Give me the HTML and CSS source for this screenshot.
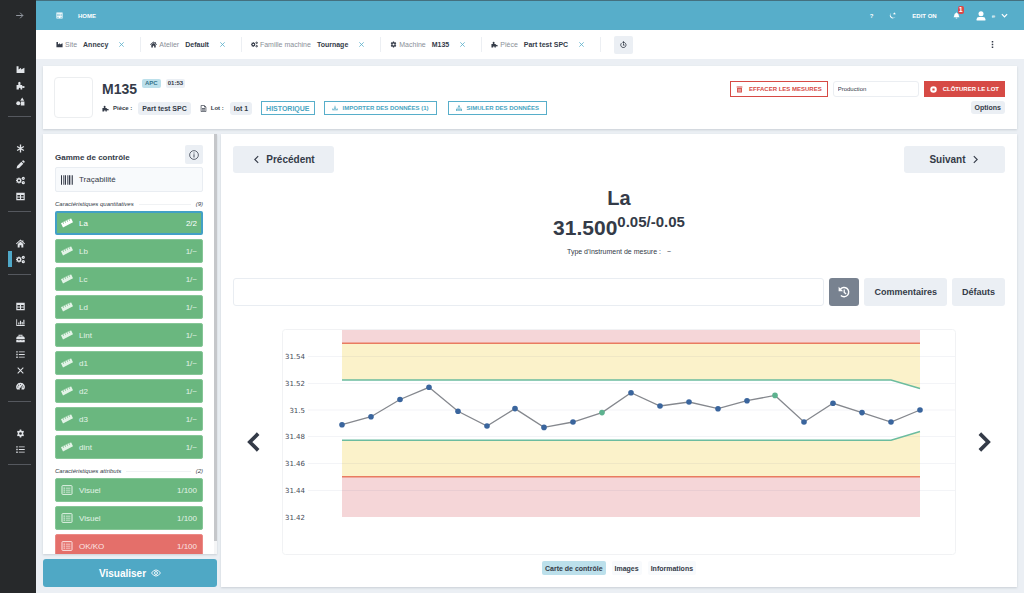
FILE: index.html
```html
<!doctype html>
<html lang="fr">
<head>
<meta charset="utf-8">
<title>M135 - Gamme de contrôle</title>
<link rel="stylesheet" href="styles.css">
</head>
<body>
<svg class="sprite" aria-hidden="true">
	<symbol id="i-factory" viewBox="0 0 16 16"><path d="M1 2h3.500v6L9 5v3l6-3v9H1z"/></symbol>
	<symbol id="i-part" viewBox="0 0 16 16"><path d="M1 7h3.200V5a2.200 2.200 0 1 1 3.600 0V7H11v2.200h1.500a1.800 1.800 0 1 1 0 3H11V15H8v-1.500a1.500 1.500 0 0 0-3 0V15H1z"/></symbol>
	<symbol id="i-shapes" viewBox="0 0 16 16"><circle cx="4" cy="11" r="3.500"/><path d="M8.500 8H15v7H8.500zM11 1l3.500 5.500h-7z"/></symbol>
	<symbol id="i-asterisk" viewBox="0 0 16 16"><path d="M8 1v14M2 4.500l12 7M14 4.500l-12 7" fill="none" stroke="currentColor" stroke-width="2.400"/></symbol>
	<symbol id="i-pencil" viewBox="0 0 16 16"><path d="M1 15l1-4.500L9.500 3 13 6.500 5.500 14zM10.500 2L12 .8q.8-.6 1.600.1l1.500 1.500q.7.8.1 1.600L14 5.500z"/></symbol>
	<symbol id="i-gear" viewBox="0 0 16 16"><path fill-rule="evenodd" d="M6.700 1h2.600l.4 2 1.400.7 1.900-.7 1.300 2.200L12.800 6.600v2.800l1.500 1.400-1.300 2.200-1.900-.7-1.400.7-.4 2H6.700l-.4-2-1.400-.7-1.900.7-1.300-2.200 1.500-1.400V6.600L1.700 5.200 3 3l1.900.7 1.400-.7zM8 5.600a2.400 2.400 0 1 0 0 4.800 2.400 2.400 0 0 0 0-4.800z"/></symbol>
	<symbol id="i-gears" viewBox="0 0 16 16"><circle cx="5.300" cy="8" r="3.200" fill="none" stroke="currentColor" stroke-width="2.600"/><path d="M5.300 2.500v2M5.300 11.500v2M0 8h2M1.400 4.100l1.500 1.500M7.700 10.400l1.500 1.500M9.200 4.100L7.700 5.600M2.900 10.400l-1.500 1.500" fill="none" stroke="currentColor" stroke-width="1.600"/><circle cx="13" cy="4.200" r="1.700" fill="none" stroke="currentColor" stroke-width="2.200"/><circle cx="13" cy="11.800" r="1.700" fill="none" stroke="currentColor" stroke-width="2.200"/></symbol>
	<symbol id="i-table" viewBox="0 0 16 16"><path fill-rule="evenodd" d="M.5 1.500h15v13H.5zM2.500 5.500v2.700H7V5.500zM9 5.500v2.700h4.500V5.500zM2.500 9.900v2.600H7V9.900zM9 9.900v2.600h4.500V9.900z"/></symbol>
	<symbol id="i-home" viewBox="0 0 16 16"><path d="M8 1l3.500 3V2H13v3.300l3 2.700-1 1.200-7-6-7 6L0 8zM8 4.500l5 4.300V15H9.500v-4h-3v4H3V8.800z"/></symbol>
	<symbol id="i-chart" viewBox="0 0 16 16"><path d="M.5 2H2v10.500h13.500V14H.5zM4 8h2v3.500H4zM7 5h2v6.500H7zM10 7h2v4.500h-2zM13 3h2v8.500h-2z"/></symbol>
	<symbol id="i-toolbox" viewBox="0 0 16 16"><path fill-rule="evenodd" d="M4.500 4.500V1.500h7v3H14l1.500 2v3h-15v-3L2 4.500zM6 3v1.500h4V3zM.5 10.500h4v1.200H6v-1.200h4v1.200h1.500v-1.200h4v4H.5z"/></symbol>
	<symbol id="i-list" viewBox="0 0 16 16"><path d="M.5 2H3v2.400H.5zM5 2.500h10.500V4H5zM.5 6.800H3v2.400H.5zM5 7.300h10.500v1.500H5zM.5 11.600H3V14H.5zM5 12h10.500v1.500H5z"/></symbol>
	<symbol id="i-cross" viewBox="0 0 16 16"><path d="M3 3l10 10M13 3L3 13" fill="none" stroke="currentColor" stroke-width="1.800"/></symbol>
	<symbol id="i-gauge" viewBox="0 0 16 16"><path fill-rule="evenodd" d="M8 1.500a7.500 7.500 0 0 0-6.200 12h12.400A7.500 7.500 0 0 0 8 1.500zM7.200 3.500h1.600v1.600H7.200zM2.500 8h1.700v1.600H2.500zM4 5h1.600v1.600H4zM11.800 8h1.700v1.600h-1.700zM11.200 4.800l.9.500-2.600 5.200a1.700 1.700 0 1 1-1-.5z"/></symbol>
	<symbol id="i-right" viewBox="0 0 16 16"><path d="M2 8h12M9 3l5 5-5 5" fill="none" stroke="currentColor" stroke-width="1.600"/></symbol>
	<symbol id="i-chev-left" viewBox="0 0 16 16"><path d="M11 2L5 8l6 6" fill="none" stroke="currentColor" stroke-width="2"/></symbol>
	<symbol id="i-chev-right" viewBox="0 0 16 16"><path d="M5 2l6 6-6 6" fill="none" stroke="currentColor" stroke-width="2"/></symbol>
	<symbol id="i-chev-down" viewBox="0 0 16 16"><path d="M2 5l6 6 6-6" fill="none" stroke="currentColor" stroke-width="2.800"/></symbol>
	<symbol id="i-angle-left" viewBox="0 0 14 22"><path d="M12 2L3 11l9 9" fill="none" stroke="currentColor" stroke-width="4"/></symbol>
	<symbol id="i-angle-right" viewBox="0 0 14 22"><path d="M2 2l9 9-9 9" fill="none" stroke="currentColor" stroke-width="4"/></symbol>
	<symbol id="i-moon" viewBox="0 0 16 16"><path d="M5.500 1.500a7 7 0 1 0 9.500 9.500A6.500 6.500 0 0 1 5.500 1.500zM9.500 2.500h2L12.300.5l1 2h2l-1.500 1.500L15 6l-2.500-1-2.200 1 .6-2z"/></symbol>
	<symbol id="i-bell" viewBox="0 0 16 16"><path d="M7 1h2v1.200a5 5 0 0 1 4 4.800q0 3.500 2 5H1q2-1.500 2-5a5 5 0 0 1 4-4.800zM6 13h4a2 2 0 0 1-4 0z"/></symbol>
	<symbol id="i-user" viewBox="0 0 16 16"><circle cx="8" cy="4.500" r="4"/><path d="M1 15v-2q0-3.500 4-3.500h6q4 0 4 3.500v2z"/></symbol>
	<symbol id="i-replay" viewBox="0 0 16 16"><path d="M3.200 5A6 6 0 1 0 8 3" fill="none" stroke="currentColor" stroke-width="2"/><path d="M9 0v6L5 3zM7 6.500h2v2h1.500v2h-4v-1H7z"/></symbol>
	<symbol id="i-file" viewBox="0 0 16 16"><path d="M2.500 1H10l3.500 3.500V15h-11z" fill="none" stroke="currentColor" stroke-width="1.600"/><path d="M9.500 1v4h4zM4.500 7h7v1.500h-7zM4.500 10h7v2.500h-7z"/></symbol>
	<symbol id="i-import" viewBox="0 0 16 16"><path d="M7 2h2v5h2.500L8 11 4.500 7H7zM1 9h2.500v3h9V9H15v5H1z"/></symbol>
	<symbol id="i-sitemap" viewBox="0 0 16 16"><path d="M6 1h4v4H8.700v2.500H14V11h2v4h-4.500v-4h1.200V8.800h-4V11H10v4H6v-4h1.300V8.800h-4V11h1.200v4H0v-4h2V7.500h5.300V5H6z"/></symbol>
	<symbol id="i-trash" viewBox="0 0 16 16"><path fill-rule="evenodd" d="M1.500 1h13v2.500h-13zM2.500 4.500h11V15h-11zM5 6.500V13h1V6.500zM7.500 6.500V13h1V6.500zM10 6.500V13h1V6.500z"/></symbol>
	<symbol id="i-stop" viewBox="0 0 16 16"><path fill-rule="evenodd" d="M8 .5a7.500 7.500 0 1 0 0 15 7.500 7.500 0 0 0 0-15zM5.500 5.500h5v5h-5z"/></symbol>
	<symbol id="i-info" viewBox="0 0 16 16"><circle cx="8" cy="8" r="7" fill="none" stroke="currentColor" stroke-width="1.200"/><path d="M7.300 4h1.400v1.500H7.300zM7.300 6.700h1.400V12H7.300z"/></symbol>
	<symbol id="i-barcode" viewBox="0 0 18 14"><path d="M0 0h1.500v14H0zM3 0h1v14H3zM5.500 0h2v14h-2zM9 0h1v14H9zM11.500 0h2v14h-2zM14.500 0h1v14h-1zM16.800 0H18v14h-1.200z"/></symbol>
	<symbol id="i-ruler" viewBox="0 0 18 14"><path d="M0 7.200l2.300-1.200 1.200 2.200 1-.5-1.200-2.200 2-1 1.200 2.200 1-.5-1.200-2.200 2-1 1.200 2.200 1-.5-1.200-2.200 2-1 1.200 2.200 1-.5-1.200-2.200L15.300.2 18 6 3 13.800z"/></symbol>
	<symbol id="i-check-list" viewBox="0 0 18 16"><rect x="1" y="1" width="16" height="14" rx="1" fill="none" stroke="currentColor" stroke-width="1.600"/><path d="M3.500 4h2v1.800h-2zM7 4.200h7.500v1.300H7zM3.500 7.200h2V9h-2zM7 7.400h7.500v1.300H7zM3.500 10.400h2v1.800h-2zM7 10.600h7.500v1.300H7z"/></symbol>
	<symbol id="i-eye" viewBox="0 0 18 14"><path d="M1 7q3.500-5.500 8-5.500T17 7q-3.500 5.500-8 5.500T1 7z" fill="none" stroke="currentColor" stroke-width="1.600"/><circle cx="9" cy="7" r="2.700" fill="none" stroke="currentColor" stroke-width="1.600"/></symbol>
	<symbol id="i-history" viewBox="0 0 16 16"><path d="M3 4.500A6.200 6.200 0 1 1 3.800 12.600" fill="none" stroke="currentColor" stroke-width="1.900"/><path d="M.8 1v6h6z"/><path d="M8.300 4.500V8.600l2.500 1.900" fill="none" stroke="currentColor" stroke-width="1.700"/></symbol>
	<symbol id="i-apps" viewBox="0 0 16 16"><path fill-rule="evenodd" d="M1 1h14v14H1zM3 4v2h3V4zM7.500 4v2h1.300V4zM10.500 4v2H13V4zM3 7.500v1.800h3V7.500zM7.500 7.500v1.800h1.300V7.500zM10.500 7.500v1.800H13V7.500zM3 11v2h3v-2zM10.500 11v2H13v-2z"/></symbol>
	<symbol id="i-dots" viewBox="0 0 16 16"><path d="M6.300 0h3.400v3.600H6.300zM6.300 6.200h3.400v3.600H6.300zM6.300 12.400h3.400V16H6.300z"/></symbol>
</svg>

<nav class="sidebar">
	<button class="sidebar-toggle" type="button" aria-label="Ouvrir le menu"><svg class="icon"><use href="#i-right"/></svg></button>
	<div class="sidebar-group">
		<a href="#" aria-label="Sites"><svg class="icon"><use href="#i-factory"/></svg></a>
		<a href="#" aria-label="Pièces"><svg class="icon"><use href="#i-part"/></svg></a>
		<a href="#" aria-label="Familles"><svg class="icon"><use href="#i-shapes"/></svg></a>
	</div>
	<div class="sidebar-group">
		<a href="#" aria-label="Caractéristiques"><svg class="icon"><use href="#i-asterisk"/></svg></a>
		<a href="#" aria-label="Édition"><svg class="icon"><use href="#i-pencil"/></svg></a>
		<a href="#" aria-label="Familles machine"><svg class="icon"><use href="#i-gears"/></svg></a>
		<a href="#" aria-label="Tableau"><svg class="icon"><use href="#i-table"/></svg></a>
	</div>
	<div class="sidebar-group">
		<a href="#" aria-label="Ateliers"><svg class="icon"><use href="#i-home"/></svg></a>
		<a href="#" class="active" aria-label="Machines"><svg class="icon"><use href="#i-gears"/></svg></a>
	</div>
	<div class="sidebar-group">
		<a href="#" aria-label="Données"><svg class="icon"><use href="#i-table"/></svg></a>
		<a href="#" aria-label="Graphiques"><svg class="icon"><use href="#i-chart"/></svg></a>
		<a href="#" aria-label="Outils"><svg class="icon"><use href="#i-toolbox"/></svg></a>
		<a href="#" aria-label="Listes"><svg class="icon"><use href="#i-list"/></svg></a>
		<a href="#" aria-label="Défauts"><svg class="icon"><use href="#i-cross"/></svg></a>
		<a href="#" aria-label="Indicateurs"><svg class="icon"><use href="#i-gauge"/></svg></a>
	</div>
	<div class="sidebar-group">
		<a href="#" aria-label="Réglages"><svg class="icon"><use href="#i-gear"/></svg></a>
		<a href="#" aria-label="Journal"><svg class="icon"><use href="#i-list"/></svg></a>
	</div>
</nav>

<div class="page">
	<header class="topbar">
		<a href="#" aria-label="Applications"><svg class="icon small"><use href="#i-apps"/></svg></a>
		<a href="#" class="home">HOME</a>
		<div class="topbar-right">
			<a href="#">?</a>
			<button type="button" aria-label="Mode sombre"><svg class="icon small"><use href="#i-moon"/></svg></button>
			<button type="button">EDIT ON</button>
			<button type="button" class="bell" aria-label="Notifications"><svg class="icon small"><use href="#i-bell"/></svg><span class="count">1</span></button>
			<button type="button" class="account"><svg class="icon large"><use href="#i-user"/></svg>e<svg class="icon small"><use href="#i-chev-down"/></svg></button>
		</div>
	</header>

	<div class="filters">
		<div class="filter"><svg class="icon small"><use href="#i-factory"/></svg><span>Site</span><b>Annecy</b><button type="button" aria-label="Retirer"><svg class="icon small"><use href="#i-cross"/></svg></button></div>
		<div class="filter"><svg class="icon small"><use href="#i-home"/></svg><span>Atelier</span><b>Default</b><button type="button" aria-label="Retirer"><svg class="icon small"><use href="#i-cross"/></svg></button></div>
		<div class="filter"><svg class="icon small"><use href="#i-gears"/></svg><span>Famille machine</span><b>Tournage</b><button type="button" aria-label="Retirer"><svg class="icon small"><use href="#i-cross"/></svg></button></div>
		<div class="filter"><svg class="icon small"><use href="#i-gear"/></svg><span>Machine</span><b>M135</b><button type="button" aria-label="Retirer"><svg class="icon small"><use href="#i-cross"/></svg></button></div>
		<div class="filter"><svg class="icon small"><use href="#i-part"/></svg><span>Pièce</span><b>Part test SPC</b><button type="button" aria-label="Retirer"><svg class="icon small"><use href="#i-cross"/></svg></button></div>
		<button type="button" class="reset" aria-label="Réinitialiser"><svg class="icon small"><use href="#i-replay"/></svg></button>
		<button type="button" class="more" aria-label="Plus"><svg class="icon small"><use href="#i-dots"/></svg></button>
	</div>

	<main class="content">
		<section class="card machine">
			<div class="photo"></div>
			<div class="machine-info">
				<div class="machine-title">
					<h1>M135</h1>
					<span class="tag blue">APC</span>
					<span class="tag">01:53</span>
				</div>
				<div class="machine-lot">
					<span class="caption"><svg class="icon small"><use href="#i-part"/></svg>Pièce :</span>
					<span class="pill">Part test SPC</span>
					<span class="caption"><svg class="icon small"><use href="#i-file"/></svg>Lot :</span>
					<span class="pill">lot 1</span>
					<button type="button" class="outline big">HISTORIQUE</button>
					<button type="button" class="outline"><svg class="icon tiny"><use href="#i-import"/></svg>IMPORTER DES DONNÉES (1)</button>
					<button type="button" class="outline"><svg class="icon tiny"><use href="#i-sitemap"/></svg>SIMULER DES DONNÉES</button>
				</div>
			</div>
			<div class="machine-actions">
				<div class="machine-buttons">
					<button type="button" class="danger-outline"><svg class="icon small"><use href="#i-trash"/></svg>EFFACER LES MESURES</button>
					<input type="text" value="Production" aria-label="Type de mesure">
					<button type="button" class="danger"><svg class="icon small"><use href="#i-stop"/></svg>CLÔTURER LE LOT</button>
				</div>
				<button type="button" class="pill">Options</button>
			</div>
		</section>

		<div class="columns">
			<aside class="range">
				<div class="card range-panel">
					<div class="range-list">
						<div class="range-head">
							<h2>Gamme de contrôle</h2>
							<button type="button" aria-label="Information"><svg class="icon large"><use href="#i-info"/></svg></button>
						</div>
						<button type="button" class="trace"><svg class="icon wide"><use href="#i-barcode"/></svg>Traçabilité</button>
						<div class="range-label"><span>Caractéristiques quantitatives</span><i></i><span>(9)</span></div>
						<div class="items">
							<button type="button" class="item selected"><svg class="icon wide"><use href="#i-ruler"/></svg>La<span>2/2</span></button>
							<button type="button" class="item"><svg class="icon wide"><use href="#i-ruler"/></svg>Lb<span>1/~</span></button>
							<button type="button" class="item"><svg class="icon wide"><use href="#i-ruler"/></svg>Lc<span>1/~</span></button>
							<button type="button" class="item"><svg class="icon wide"><use href="#i-ruler"/></svg>Ld<span>1/~</span></button>
							<button type="button" class="item"><svg class="icon wide"><use href="#i-ruler"/></svg>Lint<span>1/~</span></button>
							<button type="button" class="item"><svg class="icon wide"><use href="#i-ruler"/></svg>d1<span>1/~</span></button>
							<button type="button" class="item"><svg class="icon wide"><use href="#i-ruler"/></svg>d2<span>1/~</span></button>
							<button type="button" class="item"><svg class="icon wide"><use href="#i-ruler"/></svg>d3<span>1/~</span></button>
							<button type="button" class="item"><svg class="icon wide"><use href="#i-ruler"/></svg>dint<span>1/~</span></button>
						</div>
						<div class="range-label"><span>Caractéristiques attributs</span><i></i><span>(2)</span></div>
						<div class="items">
							<button type="button" class="item"><svg class="icon wide"><use href="#i-check-list"/></svg>Visuel<span>1/100</span></button>
							<button type="button" class="item"><svg class="icon wide"><use href="#i-check-list"/></svg>Visuel<span>1/100</span></button>
							<button type="button" class="item ko"><svg class="icon wide"><use href="#i-check-list"/></svg>OK/KO<span>1/100</span></button>
						</div>
					</div>
					<div class="scroll"><div class="scroll-thumb"></div></div>
				</div>
				<button type="button" class="view">Visualiser<svg class="icon large"><use href="#i-eye"/></svg></button>
			</aside>

			<section class="card measure">
				<div class="steps">
					<button type="button"><svg class="icon"><use href="#i-chev-left"/></svg>Précédent</button>
					<button type="button">Suivant<svg class="icon"><use href="#i-chev-right"/></svg></button>
				</div>
				<h2>La</h2>
				<p class="nominal">31.500<sup>0.05/-0.05</sup></p>
				<p class="instrument">Type d'instrument de mesure : <span>~</span></p>
				<form class="entry">
					<input type="text" aria-label="Valeur mesurée">
					<button type="button" class="history" aria-label="Historique"><svg class="icon history-icon"><use href="#i-history"/></svg></button>
					<button type="button">Commentaires</button>
					<button type="button">Défauts</button>
				</form>
				<div class="chart-row">
					<button type="button" aria-label="Graphique précédent"><svg class="icon angle"><use href="#i-angle-left"/></svg></button>
					<svg class="chart" viewBox="0 0 674 226" role="img" aria-label="Carte de contrôle">
						<rect class="frame" x="0.500" y="0.500" width="673" height="225" rx="3"/>
						<!-- tolerance and control zones -->
						<path class="zone-red" d="M60 1H638V14H60zM60 148H638V188H60z"/>
						<path class="zone-yellow" d="M60 14H638V60L609 51H60zM60 111H609L638 102.500V148H60z"/>
						<path class="grid" d="M26 27.500H673M26 54.500H673M26 81H673M26 107.500H673M26 134.500H673M26 161.500H673"/>
						<path class="tolerance" d="M60 14.300H638M60 147.700H638"/>
						<path class="control" d="M60 51H609L638 59.500M60 111.200H609L638 102.500"/>
						<g class="ticks">
							<text x="23" y="30">31.54</text>
							<text x="23" y="57">31.52</text>
							<text x="23" y="84">31.5</text>
							<text x="23" y="110">31.48</text>
							<text x="23" y="137">31.46</text>
							<text x="23" y="164">31.44</text>
							<text x="23" y="191">31.42</text>
						</g>
						<polyline class="series" points="60,95.700 89,87.700 118,70.500 147,58.300 176,82.300 205,97 233,79.600 262,98.400 291,93 320,83.600 349,63.700 378,77 407,73 436,79.700 465,71.700 493,66.400 522,93 551,74.300 580,83.600 609,93 638,81"/>
						<g class="points">
							<circle cx="60" cy="95.700" r="2.800"/>
							<circle cx="89" cy="87.700" r="2.800"/>
							<circle cx="118" cy="70.500" r="2.800"/>
							<circle cx="147" cy="58.300" r="2.800"/>
							<circle cx="176" cy="82.300" r="2.800"/>
							<circle cx="205" cy="97" r="2.800"/>
							<circle cx="233" cy="79.600" r="2.800"/>
							<circle cx="262" cy="98.400" r="2.800"/>
							<circle cx="291" cy="93" r="2.800"/>
							<circle class="adjusted" cx="320" cy="83.600" r="2.800"/>
							<circle cx="349" cy="63.700" r="2.800"/>
							<circle cx="378" cy="77" r="2.800"/>
							<circle cx="407" cy="73" r="2.800"/>
							<circle cx="436" cy="79.700" r="2.800"/>
							<circle cx="465" cy="71.700" r="2.800"/>
							<circle class="adjusted" cx="493" cy="66.400" r="2.800"/>
							<circle cx="522" cy="93" r="2.800"/>
							<circle cx="551" cy="74.300" r="2.800"/>
							<circle cx="580" cy="83.600" r="2.800"/>
							<circle cx="609" cy="93" r="2.800"/>
							<circle cx="638" cy="81" r="2.800"/>
						</g>
					</svg>
					<button type="button" aria-label="Graphique suivant"><svg class="icon angle"><use href="#i-angle-right"/></svg></button>
				</div>
				<div class="tabs">
					<button type="button" class="active">Carte de contrôle</button>
					<button type="button">Images</button>
					<button type="button">Informations</button>
				</div>
			</section>
		</div>
	</main>
</div>
</body>
</html>
```

FILE: styles.css
```css
* {
	box-sizing: border-box;
}
body {
	margin: 0;
	height: 100vh;
	display: flex;
	background: #ebeff4;
	color: #343b48;
	font: 7px "Liberation Sans", Arial, sans-serif;
}
h1, h2, p {
	margin: 0;
}
a {
	color: inherit;
	text-decoration: none;
}
button, input {
	font: inherit;
	color: inherit;
	border: 0;
	padding: 0;
	margin: 0;
	background: none;
}
button {
	display: flex;
	align-items: center;
	justify-content: center;
	cursor: pointer;
	white-space: nowrap;
}
.sprite {
	display: none;
}
.icon {
	width: 9px;
	height: 9px;
	flex: none;
	fill: currentColor;
}
.icon.tiny {
	width: 6px;
	height: 6px;
}
.icon.small {
	width: 7px;
	height: 7px;
}
.icon.large {
	width: 10px;
	height: 10px;
}
.icon.wide {
	width: 12px;
	height: 10px;
}
.card {
	background: #fff;
	box-shadow: 0 1px 2px #c9cfd5;
}

/* sidebar */
.sidebar {
	flex: none;
	width: 36px;
	padding: 0 5px 0 8px;
	background: #27292b;
	color: #e1e4e8;
}
.sidebar-toggle {
	width: 100%;
	height: 30px;
	margin-bottom: 8px;
	color: #9da3ab;
}
.sidebar-group {
	padding: 23px 0 7px;
	border-bottom: 1px solid #55585e;
}
.sidebar-group a {
	display: flex;
	align-items: center;
	justify-content: center;
	height: 16px;
	border-left: 4px solid transparent;
	padding-right: 3px;
}
.sidebar-group .active {
	border-left-color: #4fa8c8;
}

/* top */
.page {
	flex: 1;
	min-width: 0;
	display: flex;
	flex-direction: column;
}
.topbar {
	display: flex;
	align-items: center;
	height: 30px;
	padding: 0 16px 0 20px;
	gap: 15px;
	border-top: 1px solid #44707f;
	background: #57aeca;
	color: #fff;
	font-size: 6px;
	font-weight: bold;
}
.topbar a {
	display: flex;
}
.topbar-right {
	margin-left: auto;
	display: flex;
	align-items: center;
	gap: 16px;
}
.bell {
	position: relative;
}
.count {
	position: absolute;
	left: 5px;
	top: -6px;
	padding: 0 1px;
	border-radius: 2px;
	background: #d9484a;
	font-size: 7px;
	line-height: 8px;
}
.account {
	gap: 6px;
	font-weight: normal;
}
.filters {
	display: flex;
	align-items: center;
	height: 29px;
	padding: 0 28px 0 11px;
	background: #fff;
}
.filter {
	display: flex;
	align-items: center;
	height: 15px;
	padding: 0 15px 0 9px;
	gap: 2px;
	border-right: 1px solid #eceff3;
}
.filter span {
	color: #8a8f98;
}
.filter b {
	margin: 0 8px 0 4px;
}
.filter button {
	color: #57aeca;
}
.reset {
	width: 19px;
	height: 18px;
	margin-left: 13px;
	border-radius: 2px;
	background: #ebeff4;
}
.more {
	margin-left: auto;
}

/* machine header */
.content {
	flex: 1;
	min-height: 0;
	display: flex;
	flex-direction: column;
	gap: 5px;
	padding: 7px 7px 6px;
}
.machine {
	display: flex;
	align-items: flex-start;
	padding: 11px 12px 11px 11px;
}
.photo {
	width: 39px;
	height: 41px;
	margin-right: 9px;
	border: 1px solid #eceef0;
	border-radius: 4px;
}
.machine-title {
	display: flex;
	align-items: flex-start;
	height: 24px;
	gap: 5px;
}
.machine-title h1 {
	font-size: 14px;
	line-height: 24px;
}
.tag {
	margin-top: 2px;
	padding: 0 2px;
	border-radius: 2px;
	background: #ebeff4;
	font-size: 6px;
	font-weight: bold;
	line-height: 9px;
}
.tag.blue {
	padding: 0 3px;
	background: #bce0eb;
	color: #35748c;
}
.machine-lot {
	display: flex;
	align-items: center;
	gap: 9px;
}
.caption {
	display: flex;
	align-items: center;
	gap: 4px;
	margin-right: -3px;
	font-size: 6px;
	font-weight: bold;
}
.pill {
	padding: 0 4px;
	border-radius: 3px;
	background: #ebeff4;
	font-weight: bold;
	line-height: 13px;
}
.outline {
	height: 14px;
	padding: 0 7px;
	gap: 5px;
	border: 1px solid #57aeca;
	color: #4aa5c2;
	font-size: 6px;
	font-weight: bold;
}
.outline:last-child {
	margin-left: 2px;
}
.outline.big {
	padding: 0 4px;
	font-size: 7px;
}
.machine-actions {
	flex: 1;
	display: flex;
	flex-direction: column;
	align-items: flex-end;
	gap: 4px;
	padding-top: 4px;
}
.machine-buttons {
	display: flex;
	gap: 5px;
}
.machine-buttons input {
	width: 86px;
	padding: 0 4px;
	border: 1px solid #ebeef2;
	border-radius: 3px;
	font-size: 6px;
}
.danger, .danger-outline {
	height: 16px;
	padding: 0 5px;
	gap: 6px;
	border: 1px solid #d64a45;
	font-size: 6px;
	font-weight: bold;
}
.danger {
	background: #d64a45;
	color: #fff;
}
.danger-outline {
	color: #d64a45;
}

/* control range */
.columns {
	flex: 1;
	min-height: 0;
	display: flex;
	gap: 4px;
}
.range {
	flex: none;
	width: 174px;
	display: flex;
	flex-direction: column;
	gap: 5px;
}
.range-panel {
	flex: 1;
	min-height: 0;
	display: flex;
}
.range-list {
	flex: 1;
	overflow-y: auto;
	scrollbar-width: none;
	padding: 11px 11px 11px 12px;
}
.scroll {
	width: 3px;
	background: #f4f5f6;
}
.scroll-thumb {
	height: 97%;
	background: #c5c7ca;
}
.range-head {
	display: flex;
	justify-content: space-between;
	align-items: flex-end;
	margin-bottom: 3px;
}
.range-head h2 {
	font-size: 8px;
	line-height: 12px;
}
.range-head button {
	width: 18px;
	height: 19px;
	border-radius: 2px;
	background: #ebeff4;
}
.trace, .item {
	width: 100%;
	height: 24px;
	padding: 0 5px;
	gap: 6px;
	justify-content: flex-start;
	border: 1px solid #86c697;
	border-radius: 2px;
	background: #6ab77f;
	color: #e3f3e7;
	font-size: 8px;
}
.trace {
	height: 25px;
	border-color: #e9edf2;
	background: #f8fafc;
	color: #343b48;
}
.item span {
	margin-left: auto;
}
.item.selected {
	border: 2px solid #42a0c6;
	padding: 0 4px;
	color: #fff;
}
.item.ko {
	border-color: #eb8a86;
	background: #e46f6a;
	color: #fbe5e4;
}
.items {
	display: flex;
	flex-direction: column;
	gap: 4px;
}
.range-label {
	display: flex;
	align-items: center;
	gap: 5px;
	margin: 6px 0 1px;
	font-size: 6px;
	font-style: italic;
	line-height: 12px;
}
.range-label i {
	flex: 1;
	height: 1px;
	background: #f0f2f4;
}
.view {
	height: 28px;
	gap: 5px;
	border-radius: 3px;
	background: #4fa8c5;
	color: #fff;
	font-size: 10px;
	font-weight: bold;
}

/* measure */
.measure {
	flex: 1;
	min-width: 0;
	padding: 12px 12px 11px;
	text-align: center;
}
.steps {
	display: flex;
	justify-content: space-between;
	margin-bottom: 10px;
}
.steps button {
	width: 101px;
	height: 27px;
	gap: 5px;
	border-radius: 3px;
	background: #ebeff4;
	font-size: 10px;
	font-weight: bold;
}
.measure h2, .nominal {
	font-size: 20px;
	font-weight: bold;
	line-height: 30px;
}
.nominal {
	font-size: 21px;
}
.nominal sup {
	font-size: 15px;
	line-height: 0;
}
.instrument {
	margin: 3px 0 20px;
	line-height: 12px;
}
.instrument span {
	margin-left: 4px;
}
.entry {
	display: flex;
	gap: 5px;
	margin-bottom: 23px;
}
.entry input {
	flex: 1;
	min-width: 0;
	padding: 0 8px;
	border: 1px solid #e9edf2;
	border-radius: 3px;
	font-size: 10px;
}
.entry button {
	height: 28px;
	padding: 0 10px;
	border-radius: 3px;
	background: #ebeff4;
	font-size: 9px;
	font-weight: bold;
}
.entry .history {
	padding: 0 9px;
	background: #788290;
	color: #fff;
}
.history-icon {
	width: 12px;
	height: 12px;
}
.chart-row {
	display: flex;
	align-items: center;
	gap: 22px;
	padding: 0 14px;
}
.icon.angle {
	width: 13px;
	height: 22px;
}
.chart {
	flex: 1;
	min-width: 0;
}
.frame {
	fill: none;
	stroke: #f1f2f4;
}
.zone-red {
	fill: #f5d6d8;
}
.zone-yellow {
	fill: #fbf2ca;
}
.grid {
	stroke: #50608c;
	stroke-opacity: 0.07;
}
.tolerance {
	stroke: #e97b60;
	stroke-width: 1.5;
}
.control {
	fill: none;
	stroke: #6bbc9f;
	stroke-width: 1.4;
}
.ticks {
	fill: #444b57;
	font: 7px "DejaVu Sans", Verdana, sans-serif;
	text-anchor: end;
}
.series {
	fill: none;
	stroke: #85888e;
	stroke-width: 1.3;
}
.points {
	fill: #3a659d;
}
.points .adjusted {
	fill: #5db28f;
}
.tabs {
	display: flex;
	justify-content: center;
	gap: 6px;
	margin-top: 6px;
}
.tabs button {
	height: 14px;
	padding: 0 3px;
	border-radius: 2px;
	background: #f8fafc;
	font-weight: bold;
}
.tabs .active {
	background: #bce0eb;
}
```
